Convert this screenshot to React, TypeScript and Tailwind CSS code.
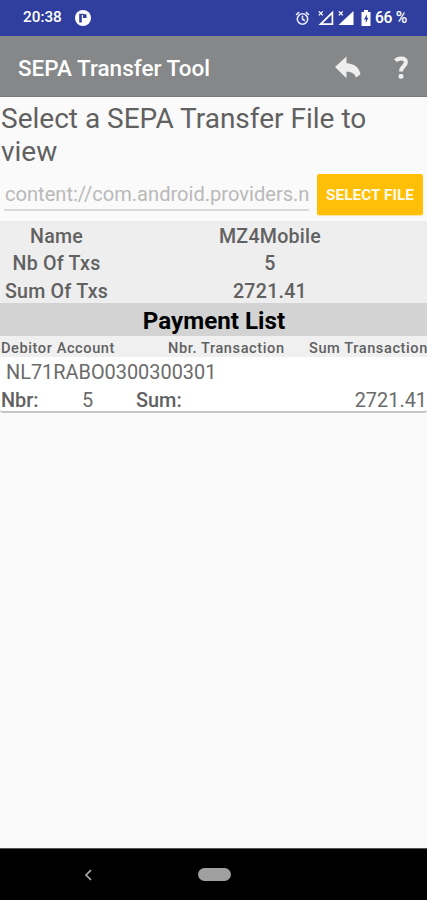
import React from "react";

function StatusBar() {
  return (
    <div className="flex h-9 items-center bg-[#303f9f] pl-[23px] text-[15.3px] font-medium text-white">
      <span className="w-[41px] whitespace-nowrap leading-none">20:38</span>
      <svg className="ml-[11px] h-4 w-4" viewBox="0 0 16 16">
        <circle cx="8" cy="8" r="8" fill="#fff" />
        <path d="M4.2 3.800h2.600v8.700H4.200zM8 4.300h3.500V8H8z" fill="#303f9f" />
        <path d="M6.800 3.800H9v1.200H6.800z" fill="#303f9f" />
      </svg>
      <svg className="ml-[204px] h-[15px] w-[15px]" viewBox="0 0 14 15" fill="none" stroke="#e2e6f8" strokeWidth="1.6">
        <circle cx="7" cy="8" r="5.2" />
        <path d="M7 4.8v3.5l2.5 1.4M.6 3.9 3.7 1.2M13.4 3.9l-3.1-2.7" />
      </svg>
      <svg className="ml-[8px] h-4 w-4" viewBox="0 0 16 16" fill="none" stroke="#fff">
        <path d="M2.6 14.2 14.4 2.6v11.6z" strokeWidth="1.7" />
        <path d="m.8 1.4 4 4m0-4-4 4" strokeWidth="1.3" />
      </svg>
      <svg className="ml-1 h-4 w-4" viewBox="0 0 16 16" fill="none" stroke="#fff">
        <path d="M.5 15 15.5 1v14z" fill="#fff" stroke="none" />
        <path d="m.8 1.4 4 4m0-4-4 4" strokeWidth="1.3" />
      </svg>
      <svg className="ml-[7px] h-4 w-[10px]" viewBox="0 0 10 16">
        <path d="M3 0h4v2h2.5v14H.5V2H3z" fill="#fff" />
        <path d="M5.800 4.300 3 9.400h1.800V13l2.600-5.300H5.800z" fill="#303f9f" />
      </svg>
      <span className="ml-[4px] whitespace-nowrap text-[15.7px] leading-none tracking-[-0.3px]">66 %</span>
    </div>
  );
}

function Toolbar() {
  return (
    <div className="flex h-[61px] items-center border-b border-[#77797b] bg-[#858789] pl-[18px] pt-1">
      <h1 className="w-[316px] whitespace-nowrap pt-px text-[22.5px] font-medium leading-none text-white">SEPA Transfer Tool</h1>
      <svg className="h-[25px] w-[27px]" viewBox="0 0 27 25">
        <path d="M1 11 12.5.6v6.700c7.500.3 12.800 4.200 14 10.900l-4.400 3.300c-1.500-3.700-4.600-5.800-9.600-5.700v6.500z" fill="#eeeeee" />
      </svg>
      <svg className="ml-[33px] h-[25px] w-[14px]" viewBox="0 0 14 25">
        <path d="M1.600 4.700C3 2.900 4.700 2.400 7 2.400c3 0 4.900 1.400 4.900 3.900 0 4-5 4-5 9.300" fill="none" stroke="#eeeeee" strokeWidth="4" />
        <rect x="4.500" y="18" width="5" height="4.800" rx="2" fill="#eeeeee" />
      </svg>
    </div>
  );
}

const summary = [
  ["Name", "MZ4Mobile"],
  ["Nb Of Txs", "5"],
  ["Sum Of Txs", "2721.41"],
];

export default function App() {
  return (
    <div className="flex h-[900px] w-[427px] flex-col overflow-hidden bg-[#fafafa] font-['Roboto',sans-serif] text-[#616161]">
      <StatusBar />
      <Toolbar />
      <main className="flex-1">
        <h2 className="h-[76px] whitespace-nowrap pl-px pt-[5px] text-[28px] leading-[33px]">
          Select a SEPA Transfer File to<br />view
        </h2>
        <div className="flex h-[48px] pl-1 pt-[1px]">
          <div className="mr-2 h-[37px] w-[305px] overflow-hidden whitespace-nowrap border-b-2 border-[#d9d9d9] pl-px pt-[8px] text-[20.1px] leading-[25px] text-[#b9b9b9]">
            content://com.android.providers.n
          </div>
          <button className="h-[41px] w-[106px] whitespace-nowrap rounded-[2px] bg-[#ffbf06] pt-[3px] text-[15.4px] font-bold text-[#fff9e8] shadow-[0_1px_1px_#ffe49a]">
            SELECT FILE
          </button>
        </div>
        <section className="h-[82px] bg-[#eeeeee] pt-[2px] text-[19.6px] font-medium leading-[27.33px] tracking-[0.25px]">
          {summary.map(([label, value]) => (
            <div key={label} className="grid grid-cols-[113px_314px] text-center">
              <span>{label}</span>
              <span>{value}</span>
            </div>
          ))}
        </section>
        <h3 className="h-[33px] bg-[#d3d3d3] pl-px pt-[1px] text-center text-[24.2px] font-bold leading-[34px] text-black">Payment List</h3>
        <div className="flex h-[21px] whitespace-nowrap bg-[#f0f0f0] pt-[1px] text-[14.6px] font-medium leading-[22px] tracking-[0.58px]">
          <span className="w-[168px] pl-px">Debitor Account</span>
          <span className="w-[141px]">Nbr. Transaction</span>
          <span className="w-[118px]">Sum Transaction</span>
        </div>
        <section className="h-[56px] rounded-b-[3px] border-b-2 border-[#c5c5c5] bg-white text-[19.9px]">
          <div className="h-[29px] pl-[6px] leading-[31px] text-[#6b6b6b]">NL71RABO0300300301</div>
          <div className="flex whitespace-nowrap leading-[29px]">
            <span className="w-[82px] pl-px font-medium">Nbr:</span>
            <span className="w-[54px] text-[#6b6b6b]">5</span>
            <span className="font-medium">Sum:</span>
            <span className="ml-auto text-[#6b6b6b]">2721.41</span>
          </div>
        </section>
      </main>
      <nav className="flex h-[52px] items-center border-t border-[#555] bg-black pl-[84px]">
        <svg className="h-3 w-2" viewBox="0 0 8 12" fill="none">
          <path d="m7 1.200-5 4.800 5 4.800" stroke="#aaa" strokeWidth="1.700" />
        </svg>
        <span className="ml-[106px] h-[13px] w-[33px] rounded-full bg-[#a0a0a0]" />
      </nav>
    </div>
  );
}
